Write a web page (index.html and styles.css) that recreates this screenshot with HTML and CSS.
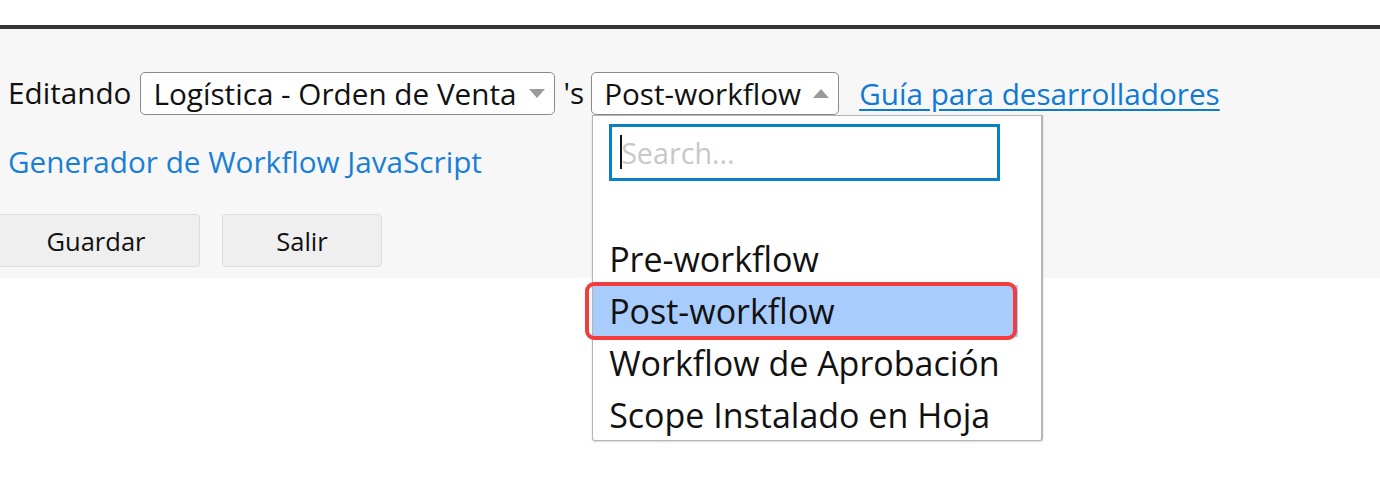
FILE: index.html
```html
<!DOCTYPE html>
<html lang="es">
<head>
<meta charset="utf-8">
<title>Editor de Workflow</title>
<link rel="stylesheet" href="styles.css">
</head>
<body>
<div class="top-space"></div>
<div class="panel">
  <div class="row row-edit">
    <span class="label">Editando</span>
    <div class="select sel-sheet">
      <span class="sel-text">Logística - Orden de Venta</span>
      <span class="arrow arrow-down"></span>
    </div>
    <span class="label poss">'s</span>
    <div class="select-wrap">
      <div class="select sel-type">
        <span class="sel-text">Post-workflow</span>
        <span class="arrow arrow-up"></span>
      </div>
      <div class="dropdown">
        <div class="search-box">
          <span class="caret"></span>
          <span class="placeholder">Search...</span>
        </div>
        <ul class="options">
          <li class="opt opt-empty"></li>
          <li class="opt">Pre-workflow</li>
          <li class="opt opt-active">Post-workflow</li>
          <li class="opt">Workflow de Aprobación</li>
          <li class="opt">Scope Instalado en Hoja</li>
        </ul>
      </div>
    </div>
    <a class="guide" href="#">Guía para desarrolladores</a>
  </div>
  <div class="row row-gen">
    <a class="gen" href="#">Generador de Workflow JavaScript</a>
  </div>
  <div class="row row-btns">
    <button class="btn btn-save">Guardar</button>
    <button class="btn btn-exit">Salir</button>
  </div>
</div>
</body>
</html>
```
FILE: styles.css
```css
* { box-sizing: border-box; }
body {
  margin: 0;
  padding: 0;
  min-height: 491px;
  background: #ffffff;
  font-family: "Open Sans", "Noto Sans", sans-serif;
  color: #111;
}
.top-space {
  height: 25px;
  background: #fff;
}
.panel {
  background: #f7f7f7;
  border-top: 4px solid #333333;
  height: 253px;
  padding-top: 43px;
  position: relative;
}
.row {
  display: flex;
  align-items: center;
}
.row-edit {
  height: 42px;
  padding-left: 8px;
}
.label {
  font-size: 29.7px;
  line-height: 1;
  color: #111;
}
.poss {
  margin-left: 8px;
  margin-right: 7px;
}
.select {
  height: 43px;
  border: 1px solid #8a8a8a;
  border-radius: 5px;
  background: #fff;
  display: flex;
  align-items: center;
  padding-left: 12px;
  padding-right: 9px;
  font-size: 29.7px;
  color: #111;
}
.sel-sheet {
  width: 415px;
  margin-left: 9px;
}
.sel-type {
  width: 248px;
}
.sel-text {
  flex: 1;
  white-space: nowrap;
}
.arrow {
  width: 0;
  height: 0;
  border-left: 8px solid transparent;
  border-right: 8px solid transparent;
}
.arrow-down {
  border-top: 9px solid #9a9a9a;
}
.arrow-up {
  border-bottom: 9px solid #9a9a9a;
}
.select-wrap {
  position: relative;
  z-index: 10;
}
.guide {
  margin-left: 20px;
  font-size: 29.7px;
  color: #0f7ad4;
  text-decoration: underline;
  text-underline-offset: 4px;
}
.row-gen {
  margin-top: 27px;
  height: 40px;
  padding-left: 8px;
}
.gen {
  font-size: 29.7px;
  color: #1a7fd4;
  text-decoration: none;
}
.row-btns {
  margin-top: 33px;
  gap: 22px;
}
.btn {
  height: 53px;
  width: 160px;
  background: #efefef;
  border: 1px solid #dcdcdc;
  border-radius: 4px;
  font-family: "Open Sans", "Noto Sans", sans-serif;
  font-size: 25.5px;
  color: #111;
  padding: 0;
}
.btn-save {
  width: 208px;
  margin-left: -8px;
}
.dropdown {
  position: absolute;
  top: 43px;
  left: 1px;
  width: 451px;
  height: 326px;
  background: #fff;
  border: 1px solid #b5b5b5;
  border-right-width: 2px;
  border-radius: 0 0 3px 3px;
  box-shadow: 0 1px 2px rgba(0,0,0,0.15);
  z-index: 5;
}
.search-box {
  margin: 8px 0 0 16px;
  width: 391px;
  height: 57px;
  border: 3px solid #0a80c6;
  display: flex;
  align-items: center;
  padding-left: 8px;
  font-size: 28.7px;
}
.caret {
  width: 2px;
  height: 34px;
  background: #111;
  margin-right: -1px;
}
.placeholder {
  color: #c8c8c8;
}
.options {
  list-style: none;
  margin: 0;
  padding: 0;
  width: 425px;
}
.opt {
  height: 52px;
  line-height: 52px;
  padding-left: 16px;
  font-size: 34px;
  color: #111;
  white-space: nowrap;
  position: relative;
}
.opt-active {
  background: #a8cdfc;
}
.opt-active::after {
  content: "";
  position: absolute;
  left: -8px;
  right: 1px;
  top: -3px;
  bottom: -3px;
  border: 4px solid #f43c3c;
  border-radius: 9px;
}
```
